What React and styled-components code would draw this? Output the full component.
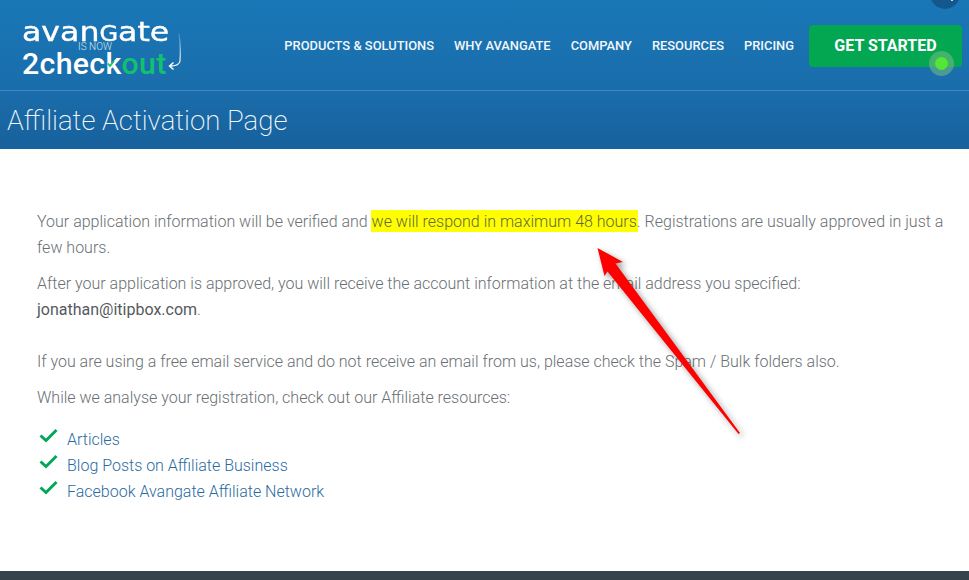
import React from 'react';
import styled, { createGlobalStyle } from 'styled-components';

const Global = createGlobalStyle`
  *, *::before, *::after { box-sizing: border-box; }
  html, body { margin: 0; padding: 0; background: #fff; }
  body { font-family: Roboto, "Liberation Sans", sans-serif; overflow: hidden; }
`;
const Page = styled.div`
  position: relative;
  width: 969px;
  height: 580px;
  overflow: hidden;
  display: flex;
  flex-direction: column;
`;
const Header = styled.header`
  height: 149px;
  flex: none;
  background: linear-gradient(180deg, #1a77b7 0%, #1a6dab 60%, #17619c 100%);
  display: flex;
  flex-direction: column;
`;
const TopBar = styled.div`
  height: 91px;
  flex: none;
  border-bottom: 1px solid #4286bd;
  display: flex;
  align-items: flex-start;
  padding: 25px 7px 0 22px;
`;
const Logo = styled.div`
  position: relative;
  width: 160px;
  height: 52px;
  color: #fff;
  flex: none;
`;
const LogoTop = styled.div`
  font: 400 27px/20px "DejaVu Sans", sans-serif;
  transform: scaleX(1.17);
  transform-origin: left center;
  -webkit-text-stroke: 0.4px #fff;
  height: 20px;
  margin-top: -3px;
  white-space: nowrap;
`;
const LogoCapG = styled.span`
  font-size: 20.5px;
  text-transform: uppercase;
`;
const LogoNow = styled.div`
  font: 300 10px/10px Roboto, sans-serif;
  text-align: center;
  width: 146px;
  color: #d3e3f0;
  height: 9px;
`;
const LogoBottom = styled.div`
  font: 500 30.3px/26px Roboto, sans-serif;
  letter-spacing: 0.3px;
  white-space: nowrap;
`;
const LogoGreen = styled.span`
  color: #13c06d;
`;
const LogoHook = styled.svg`
  position: absolute;
  left: 144px;
  top: 8px;
`;
const LogoTick = styled.svg`
  position: absolute;
  left: 85px;
  top: 35px;
`;
const Nav = styled.nav`
  display: flex;
  align-items: center;
  gap: 20px;
  margin-left: auto;
  margin-right: 15px;
  height: 42px;
`;
const NavItem = styled.a`
  color: #f2f7fb;
  font: 500 12.9px/16px Roboto, sans-serif;
  white-space: nowrap;
`;
const CTA = styled.a`
  position: relative;
  width: 153px;
  height: 42px;
  border-radius: 4px;
  background: #03a751;
  color: #fff;
  font: 700 16px/42px Roboto, sans-serif;
  text-align: center;
  flex: none;
`;
const Pulse = styled.span`
  position: absolute;
  left: 126px;
  top: 32px;
  width: 13px;
  height: 13px;
  border-radius: 50%;
  background: #53e637;
  box-shadow: 0 0 0 6px rgba(120, 190, 130, 0.55);
`;
const Bubble = styled.span`
  position: absolute;
  left: 930px;
  top: -21px;
  width: 30px;
  height: 30px;
  border-radius: 50%;
  background: #14578c;
  &::after {
    content: '';
    position: absolute;
    left: 21px;
    top: 20px;
    width: 2px;
    height: 2px;
    background: #cfe0ee;
  }
`;
const TitleBar = styled.div`
  flex: 1;
  display: flex;
  align-items: center;
  padding: 2px 7px 0;
`;
const Title = styled.h1`
  margin: 0;
  color: #f4f8fb;
  font: 200 27.6px/34px Roboto, sans-serif;
`;
const Main = styled.main`
  flex: 1;
  padding: 60px 20px 0 37px;
  color: #6a6f74;
  font: 300 16px/26px Roboto, sans-serif;
`;
const Para = styled.p`
  margin: 0 0 ${p => p.$gap ?? 10}px;
`;
const Strong = styled.span`
  font-weight: 400;
  color: #55595d;
`;
const Mark = styled.mark`
  background: #ffff00;
  color: #63683c;
  padding: 2px 1px 1px;
  margin: 0 -1px;
`;
const List = styled.ul`
  list-style: none;
  margin: 16px 0 0;
  padding: 0;
`;
const Item = styled.li`
  display: flex;
  align-items: center;
  height: 26px;
  gap: 9px;
  color: #2a6b9f;
`;
const Check = styled.svg`
  flex: none;
  margin: -9px 0 0 2px;
`;
const Footer = styled.footer`
  height: 9px;
  flex: none;
  background: #36434d;
`;
const Arrow = styled.svg`
  position: absolute;
  left: 580px;
  top: 230px;
  filter: drop-shadow(3px 3px 3px rgba(0,0,0,0.4));
`;

const nav = ['PRODUCTS & SOLUTIONS', 'WHY AVANGATE', 'COMPANY', 'RESOURCES', 'PRICING'];
const links = ['Articles', 'Blog Posts on Affiliate Business', 'Facebook Avangate Affiliate Network'];

export default function App() {
  return (
    <Page>
      <Global />
      <Header>
        <TopBar>
          <Logo>
            <LogoTop>avan<LogoCapG>g</LogoCapG>ate</LogoTop>
            <LogoNow>IS NOW</LogoNow>
            <LogoBottom>2check<LogoGreen>out</LogoGreen></LogoBottom>
            <LogoTick width="8" height="8" viewBox="0 0 8 8" fill="none">
              <path d="M1 3.5 L3 6 L7 1" stroke="#13c06d" strokeWidth="1.8" />
            </LogoTick>
            <LogoHook width="18" height="40" viewBox="0 0 18 40" fill="none">
              <defs>
                <linearGradient id="hook" x1="0" y1="0" x2="0" y2="1">
                  <stop offset="0" stopColor="#fff" stopOpacity="0.1" />
                  <stop offset="1" stopColor="#fff" />
                </linearGradient>
              </defs>
              <path d="M13 0 C14.5 10 14.5 20 14 28 C13.5 32 10 33 4 33" stroke="url(#hook)" strokeWidth="1.3" />
              <path d="M7.5 29.5 L3.5 33 L7.5 36.5" stroke="#fff" strokeWidth="1.4" />
            </LogoHook>
          </Logo>
          <Nav>
            {nav.map(n => <NavItem key={n}>{n}</NavItem>)}
          </Nav>
          <CTA>GET STARTED<Pulse /></CTA>
        </TopBar>
        <TitleBar><Title>Affiliate Activation Page</Title></TitleBar>
      </Header>
      <Bubble />
      <Main>
        <Para>Your application information will be verified and <Mark>we will respond in maximum 48 hours</Mark>. Registrations are usually approved in just a few hours.</Para>
        <Para $gap={26}>After your application is approved, you will receive the account information at the email address you specified: <Strong>jonathan@itipbox.com</Strong>.</Para>
        <Para>If you are using a free email service and do not receive an email from us, please check the Spam / Bulk folders also.</Para>
        <Para>While we analyse your registration, check out our Affiliate resources:</Para>
        <List>
          {links.map(l => (
            <Item key={l}>
              <Check width="19" height="15" viewBox="0 0 19 15" fill="none">
                <path d="M1.5 7.5 L7 12.5 L17.5 2" stroke="#03a65a" strokeWidth="3" />
              </Check>
              {l}
            </Item>
          ))}
        </List>
      </Main>
      <Footer />
      <Arrow width="180" height="220" viewBox="0 0 180 220">
        <path d="M17.5 18 L43 32 L35.5 33.5 L160 203 L158.5 204 L27.5 41.5 L24.5 46 Z" fill="#fe0000" />
      </Arrow>
    </Page>
  );
}
